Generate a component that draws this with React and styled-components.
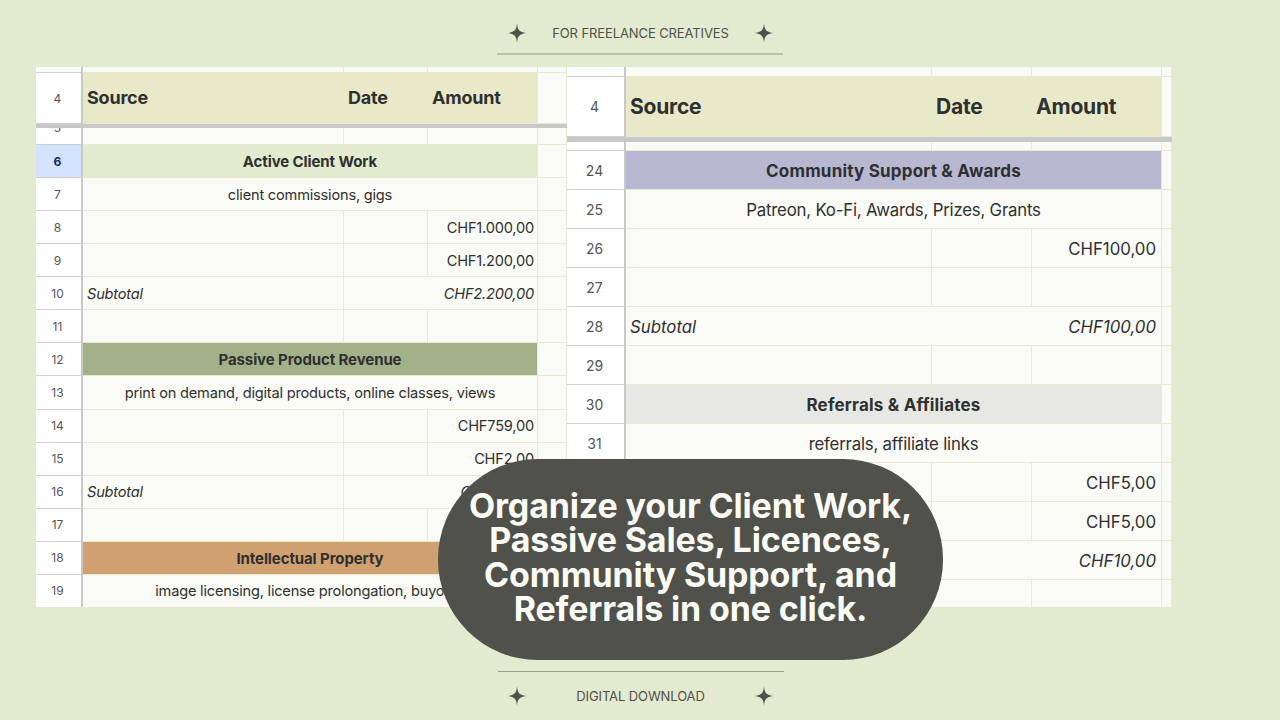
import styled, { createGlobalStyle } from "styled-components"

const GlobalStyle = createGlobalStyle`
  html, body {
    margin: 0;
    padding: 0;
    background: #e2eacf;
  }
`

const Page = styled.div`
  width: 1280px;
  height: 720px;
  overflow: hidden;
  display: flex;
  flex-direction: column;
  font-family: "Inter", "Noto Sans", sans-serif;
  color: #2f3030;
`

const TopBanner = styled.div`
  height: 67px;
  box-sizing: border-box;
  padding-bottom: 12px;
  display: flex;
  flex-direction: column;
  align-items: center;
  justify-content: flex-end;
`

const BottomBanner = styled.div`
  height: 113px;
  box-sizing: border-box;
  padding: 64px 0 0 2px;
  display: flex;
  flex-direction: column;
  align-items: center;
`

const BannerInner = styled.div`
  width: 286px;
  height: ${(p) => p.$h}px;
  box-sizing: border-box;
  display: flex;
  align-items: center;
  justify-content: space-between;
  padding: ${(p) => p.$pad};
  font-size: 13px;
  line-height: 16px;
  letter-spacing: -0.1px;
  color: #50514a;
`

const Rule = styled.div`
  width: 286px;
  height: ${(p) => p.$h}px;
  background: ${(p) => p.$color};
`

const Star = () => (
  <svg width="18" height="20" viewBox="0 0 18 20">
    <path
      d="M9 0 C9.5 6 10.5 9 18 10 C10.5 11 9.5 14 9 20 C8.5 14 7.5 11 0 10 C7.5 9 8.5 6 9 0 Z"
      fill="#50514a"
    />
  </svg>
)

const Stage = styled.div`
  position: relative;
  height: 540px;
  padding-left: 36px;
  display: flex;
`

const Sheet = styled.div`
  display: flex;
  flex-direction: column;
  width: ${(p) => p.$w}px;
  height: 540px;
  overflow: hidden;
  background: #fafbf6;
`

const Row = styled.div`
  display: grid;
  grid-template-columns: ${(p) => p.$cols};
  height: ${(p) => p.$h}px;
  flex: none;
`

const Gutter = styled.div`
  background: ${(p) => (p.$active ? "#d3e3fd" : "#fff")};
  color: ${(p) => (p.$active ? "#0b2a66" : "#555")};
  font-weight: ${(p) => (p.$active ? 700 : 400)};
  font-size: ${(p) => p.$size}px;
  border-right: 2px solid #c8c8c8;
  border-bottom: 1px solid #cfcfcf;
  box-sizing: border-box;
  display: flex;
  align-items: center;
  justify-content: center;
  overflow: hidden;
  line-height: 1;
  padding: 1px 2px 0 0;
`

const ClippedLabel = styled.span`
  align-self: flex-start;
  margin-top: -7px;
`

const Cell = styled.div`
  box-sizing: border-box;
  border-right: 1px solid #e8ebcf;
  border-bottom: 1px solid #e8ebcf;
  padding: 1px ${(p) => p.$padR || 4}px 0 4px;
  min-width: 0;
  display: flex;
  align-items: center;
  justify-content: ${(p) => p.$justify || "flex-start"};
  grid-column: span ${(p) => p.$span || 1};
  background: ${(p) => p.$fill || "transparent"};
  font-size: ${(p) => p.$size}px;
  font-weight: ${(p) => p.$weight || 400};
  font-style: ${(p) => (p.$italic ? "italic" : "normal")};
  white-space: nowrap;
  letter-spacing: ${(p) => p.$track ?? -0.2}px;
`

const HeaderCell = styled(Cell)`
  padding-top: 0;
  padding-bottom: 1px;
  background: #e8e9c8;
  font-weight: 700;
`

const Freeze = styled.div`
  height: ${(p) => p.$h}px;
  flex: none;
  background: #c8c8c8;
`

const Pill = styled.div`
  position: absolute;
  left: 438px;
  top: 392px;
  width: 505px;
  height: 201px;
  box-sizing: border-box;
  border-radius: 100px;
  background: #50514a;
  color: #fbfbf6;
  display: flex;
  align-items: center;
  justify-content: center;
  text-align: center;
  font-size: 34px;
  font-weight: 700;
  line-height: 34.4px;
  letter-spacing: -0.15px;
  padding-bottom: 4px;
`

const leftSheet = {
  width: 531,
  cols: "47px 261px 84px 110px 29px",
  gutter: 12,
  text: 14.6,
  band: 15,
  bandTrack: -0.1,
  amountTrack: -0.2,
  padR: 3,
  header: { h: 51, size: 18 },
  freeze: 4,
  top: 6,
  stub: 17,
  rowH: 33.07,
  rows: [
    { n: 6, kind: "band", fill: "#e2eacf", text: "Active Client Work", active: true },
    { n: 7, kind: "note", text: "client commissions, gigs" },
    { n: 8, amount: "CHF1.000,00" },
    { n: 9, amount: "CHF1.200,00" },
    { n: 10, kind: "subtotal", amount: "CHF2.200,00" },
    { n: 11 },
    { n: 12, kind: "band", fill: "#a3b18a", text: "Passive Product Revenue" },
    { n: 13, kind: "note", text: "print on demand, digital products, online classes, views" },
    { n: 14, amount: "CHF759,00" },
    { n: 15, amount: "CHF2,00" },
    { n: 16, kind: "subtotal", amount: "CHF761,00" },
    { n: 17 },
    { n: 18, kind: "band", fill: "#d1a071", text: "Intellectual Property" },
    { n: 19, kind: "note", text: "image licensing, license prolongation, buyouts" },
  ],
}

const rightSheet = {
  width: 605,
  cols: "59px 306px 100px 130px 10px",
  gutter: 14,
  text: 16.8,
  band: 17,
  bandTrack: 0.2,
  amountTrack: 0,
  padR: 5,
  header: { h: 60, size: 21 },
  freeze: 5,
  top: 10,
  stub: 9,
  rowH: 39,
  rows: [
    { n: 24, kind: "band", fill: "#b7b7d1", text: "Community Support & Awards" },
    { n: 25, kind: "note", text: "Patreon, Ko-Fi, Awards, Prizes, Grants" },
    { n: 26, amount: "CHF100,00" },
    { n: 27 },
    { n: 28, kind: "subtotal", amount: "CHF100,00", merged: true },
    { n: 29 },
    { n: 30, kind: "band", fill: "#e7e8e3", text: "Referrals & Affiliates" },
    { n: 31, kind: "note", text: "referrals, affiliate links" },
    { n: 32, amount: "CHF5,00" },
    { n: 33, amount: "CHF5,00" },
    { n: 34, kind: "subtotal", amount: "CHF10,00", merged: true },
    { n: 35 },
  ],
}

const SheetRow = ({ row, sheet }) => {
  const size = sheet.text
  let cells
  if (row.kind === "band") {
    cells = (
      <Cell $span={3} $justify="center" $size={sheet.band} $weight={700} $track={sheet.bandTrack} $fill={row.fill}>
        {row.text}
      </Cell>
    )
  } else if (row.kind === "note") {
    cells = (
      <Cell $span={3} $justify="center" $size={size}>
        {row.text}
      </Cell>
    )
  } else if (row.merged) {
    cells = (
      <Cell $span={3} $justify="space-between" $padR={sheet.padR} $size={size} $track={sheet.amountTrack} $italic>
        <span>Subtotal</span>
        <span>{row.amount}</span>
      </Cell>
    )
  } else if (row.kind === "subtotal") {
    cells = (
      <>
        <Cell $size={size} $italic>Subtotal</Cell>
        <Cell $span={2} $justify="flex-end" $padR={sheet.padR} $size={size} $track={sheet.amountTrack} $italic>{row.amount}</Cell>
      </>
    )
  } else {
    cells = (
      <>
        <Cell />
        <Cell />
        <Cell $justify="flex-end" $padR={sheet.padR} $size={size} $track={sheet.amountTrack}>{row.amount}</Cell>
      </>
    )
  }
  return (
    <Row $cols={sheet.cols} $h={sheet.rowH}>
      <Gutter $size={sheet.gutter} $active={row.active}>{row.n}</Gutter>
      {cells}
      <Cell />
    </Row>
  )
}

const SpreadSheet = ({ sheet, stubLabel }) => (
  <Sheet $w={sheet.width}>
    <Row $cols={sheet.cols} $h={sheet.top}>
      <Gutter />
      <Cell />
      <Cell />
      <Cell />
      <Cell />
    </Row>
    <Row $cols={sheet.cols} $h={sheet.header.h}>
      <Gutter $size={sheet.gutter}>4</Gutter>
      <HeaderCell $size={sheet.header.size}>Source</HeaderCell>
      <HeaderCell $size={sheet.header.size}>Date</HeaderCell>
      <HeaderCell $size={sheet.header.size}>Amount</HeaderCell>
      <Cell />
    </Row>
    <Freeze $h={sheet.freeze} />
    <Row $cols={sheet.cols} $h={sheet.stub}>
      <Gutter $size={sheet.gutter}>
        {stubLabel && <ClippedLabel>{stubLabel}</ClippedLabel>}
      </Gutter>
      <Cell />
      <Cell />
      <Cell />
      <Cell />
    </Row>
    {sheet.rows.map((row) => (
      <SheetRow key={row.n} row={row} sheet={sheet} />
    ))}
  </Sheet>
)

const App = () => {
  return (
    <Page>
      <GlobalStyle />
      <TopBanner>
        <BannerInner $h={34} $pad="0 10px 7px 11px">
          <Star />
          <span>FOR FREELANCE CREATIVES</span>
          <Star />
        </BannerInner>
        <Rule $h={2} $color="#b9c2a6" />
      </TopBanner>
      <Stage>
        <SpreadSheet sheet={leftSheet} stubLabel="5" />
        <SpreadSheet sheet={rightSheet} />
        <Pill>
          <div>
            Organize your Client Work,
            <br />
            Passive Sales, Licences,
            <br />
            Community Support, and
            <br />
            Referrals in one click.
          </div>
        </Pill>
      </Stage>
      <BottomBanner>
        <Rule $h={1} $color="#9aa28c" />
        <BannerInner $h={48} $pad="0 11px 0 10px">
          <Star />
          <span>DIGITAL DOWNLOAD</span>
          <Star />
        </BannerInner>
      </BottomBanner>
    </Page>
  )
}

export default App
